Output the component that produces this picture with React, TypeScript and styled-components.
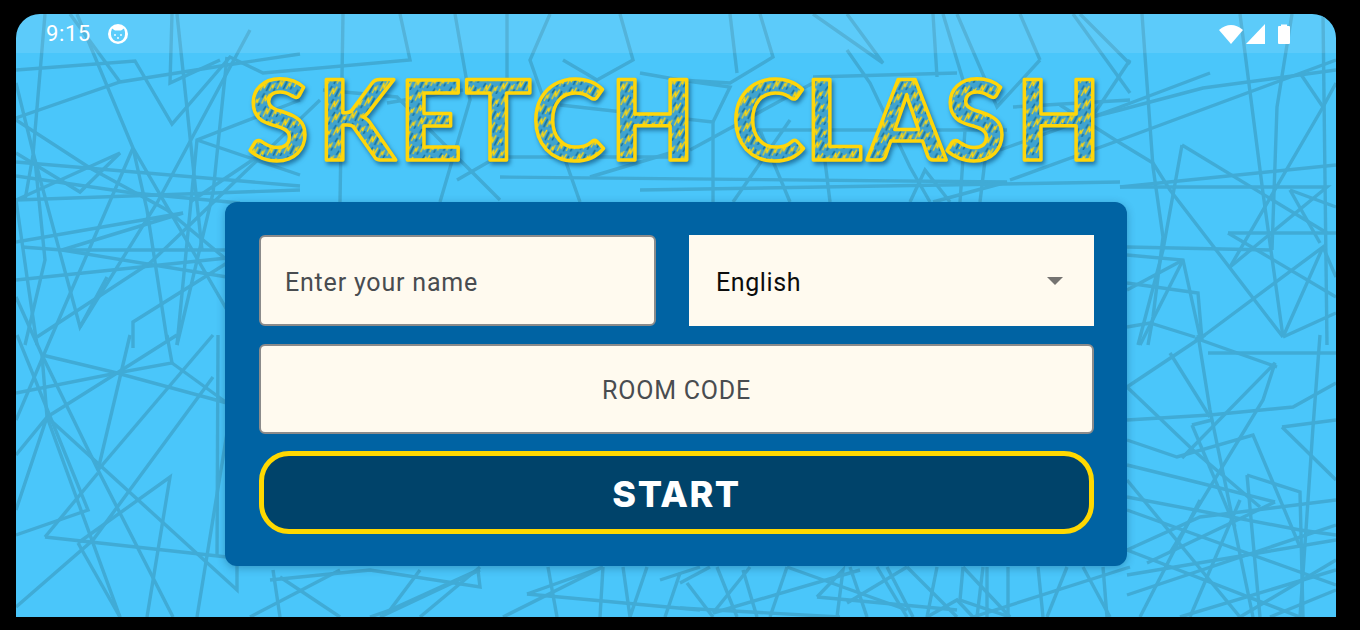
import React from "react";
import styled, { createGlobalStyle } from "styled-components";

const GlobalStyle = createGlobalStyle`
  html, body {
    margin: 0;
    height: 100%;
    background: #000;
  }
  body {
    padding: 14px 24px 13px 16px;
    box-sizing: border-box;
    font-family: Roboto, "Liberation Sans", sans-serif;
    overflow: hidden;
  }
`;

// traced by eye, in page coordinates
const SCRIBBLES = [
  "16,70 135,61 172,124 230,57 263,73 410,60 400,14",
  "16,118 120,82 240,63 300,54",
  "45,14 33,155 25,200",
  "77,14 133,148 227,310",
  "70,14 120,82",
  "16,120 90,168 167,210 227,260",
  "16,153 80,192 120,153 16,200",
  "16,162 300,186",
  "16,176 133,193 240,203",
  "16,200 300,190",
  "16,242 183,213 62,250 227,277",
  "22,247 62,250 227,250",
  "16,280 227,258",
  "35,160 80,327 107,277",
  "133,148 50,340 16,420",
  "133,148 147,210 167,340",
  "37,337 150,263 320,100",
  "133,348 133,322 227,263",
  "177,345 197,140 300,100",
  "197,140 300,175",
  "172,14 170,83 220,60",
  "177,14 202,250",
  "227,57 213,193 177,345",
  "250,30 157,203 80,327",
  "16,83 35,160 45,260 25,345",
  "16,200 27,277 37,345",
  "16,297 42,355",
  "42,355 117,373 172,363 167,335",
  "16,393 117,373 227,403",
  "42,355 47,417 120,617",
  "16,455 47,417 16,510",
  "47,417 117,373 177,335",
  "42,355 98,470 173,617",
  "17,335 88,510 16,535",
  "47,417 237,590 237,550",
  "98,470 130,335",
  "98,470 213,335",
  "45,537 227,557",
  "45,537 98,473",
  "78,543 170,477 147,617",
  "78,543 120,617",
  "16,607 93,540 213,377",
  "172,363 227,403",
  "218,335 217,557",
  "197,617 227,433",
  "270,580 370,570 480,587 478,570 390,610 370,617",
  "250,617 340,570",
  "280,577 340,617",
  "280,617 273,570",
  "390,610 420,570",
  "380,617 480,570",
  "420,617 480,567",
  "527,594 700,610",
  "527,594 603,567 503,617",
  "548,567 557,617",
  "603,567 600,617",
  "623,567 630,617 647,567",
  "680,573 665,617",
  "660,580 700,567",
  "680,583 710,567",
  "687,583 713,617",
  "717,567 737,617",
  "713,613 750,567",
  "743,570 757,617",
  "680,608 840,617",
  "770,617 787,567",
  "713,613 860,570",
  "787,567 907,610",
  "817,597 843,570 837,617",
  "817,597 957,610",
  "850,567 867,617",
  "847,603 907,567",
  "877,567 907,617",
  "887,567 913,617",
  "907,567 957,617",
  "937,567 927,617",
  "963,567 960,600 1010,617",
  "927,617 957,600 973,617",
  "963,567 1010,617",
  "983,567 977,617",
  "987,567 987,617",
  "1008,567 1008,617",
  "973,617 1130,567",
  "1038,567 1043,617",
  "1067,567 1047,617",
  "1083,567 1110,617",
  "1103,567 1107,617",
  "1142,14 1153,167 1163,237 1153,317 1148,345",
  "1000,150 1120,107 1210,73",
  "1040,130 1120,110 1203,88 1336,70",
  "1010,180 1120,140 1336,60",
  "1060,105 1120,143 1153,163 1170,190 1283,337",
  "1240,14 1263,193 1283,337",
  "1292,14 1277,107 1272,250",
  "1182,145 1327,233",
  "1182,145 1163,250 1138,345",
  "1120,187 1336,165",
  "1120,187 1327,187 1230,267",
  "1230,267 1323,107 1336,83",
  "1323,107 1300,73",
  "1323,14 1327,345",
  "1228,233 1336,233",
  "1228,233 1336,297",
  "1127,247 1270,250",
  "1127,255 1183,260 1200,337",
  "1183,260 1140,345",
  "1127,283 1198,293 1202,340",
  "1127,290 1183,260",
  "1127,327 1150,323 1195,337",
  "1202,337 1323,247 1283,337",
  "1290,190 1336,207",
  "1290,190 1320,243",
  "1323,247 1336,277",
  "1283,337 1336,313",
  "1198,335 1210,410 1253,617",
  "1127,387 1205,335",
  "1170,353 1210,417",
  "1127,387 1193,450 1260,507",
  "1208,353 1336,353",
  "1195,338 1277,367",
  "1127,420 1210,415 1293,407 1336,383",
  "1127,440 1177,457 1253,435 1300,547",
  "1182,458 1275,363 1263,400 1170,553",
  "1192,425 1235,527",
  "1192,425 1212,420",
  "1282,427 1336,420",
  "1282,427 1336,480",
  "1320,335 1313,427 1300,617",
  "1247,475 1300,492 1303,617",
  "1247,475 1260,617",
  "1127,465 1200,483 1275,502",
  "1275,502 1147,563",
  "1127,497 1300,530 1336,535",
  "1127,510 1336,585",
  "1127,550 1200,517 1336,500",
  "1127,575 1336,540",
  "1127,595 1336,525",
  "1127,550 1300,617",
  "1140,617 1200,500",
  "1190,617 1240,500",
  "1180,617 1336,570",
  "1240,617 1336,560",
  "1270,617 1336,590",
  "1127,480 1240,617",
  "343,14 340,202",
  "455,14 470,100 440,202",
  "507,14 507,100",
  "550,14 530,60 580,202",
  "563,60 597,80 633,60 620,14",
  "190,202 257,157 300,140",
  "457,180 497,157 680,157",
  "590,177 680,150",
  "387,103 463,90",
  "323,90 397,97 500,200",
  "640,73 680,80 730,83 773,57 760,14",
  "730,14 737,73",
  "680,80 730,87 713,122",
  "813,14 883,63 847,14",
  "847,50 870,83 910,167 930,202",
  "813,77 957,73",
  "933,14 937,77",
  "943,14 970,103",
  "1040,60 997,107 957,14",
  "1040,60 1020,14",
  "560,105 713,122 713,202",
  "500,177 1007,182 933,202",
  "640,190 1120,182",
  "690,150 813,83",
  "757,130 1007,130",
  "1130,100 1013,107",
  "1080,14 1130,64",
  "1073,14 1130,93",
  "1130,60 1090,120",
  "733,202 790,120",
  "790,202 760,130",
  "820,120 830,202",
  "910,202 925,170 950,202",
  "960,202 965,130",
  "980,202 985,160",
];

const Screen = styled.main`
  position: relative;
  width: 1320px;
  height: 603px;
  background: #4ac6fa;
  border-radius: 24px 24px 0 0;
  overflow: hidden;
`;

const Scribbles = styled.svg`
  position: absolute;
  inset: 0;
  width: 100%;
  height: 100%;
`;

const Scribble = styled.polyline`
  fill: none;
  stroke: #40abd6;
  stroke-width: 3.4;
  stroke-linejoin: miter;
`;

const Content = styled.div`
  position: relative;
  display: flex;
  flex-direction: column;
  align-items: center;
`;

const StatusBar = styled.header`
  align-self: stretch;
  height: 39px;
  display: flex;
  align-items: center;
  justify-content: space-between;
  padding: 0 46px 0 30px;
  background: rgba(255, 255, 255, 0.1);
  color: #fff;
  font-size: 22px;
  letter-spacing: 0.6px;
`;

const StatusLeft = styled.div`
  display: flex;
  align-items: center;
  gap: 17px;
`;

const StatusRight = styled.div`
  display: flex;
  align-items: center;
  gap: 13px;
`;

const SignalGroup = styled.div`
  display: flex;
  align-items: center;
  gap: 3px;
`;

const Logo = styled.svg`
  display: block;
  width: 1320px;
  height: 149px;
`;

const LogoText = styled.text`
  font-family: Lato, "Open Sans", sans-serif;
  font-weight: 900;
  font-size: 110px;
  stroke: #ffd60a;
  stroke-width: 3.5;
  stroke-linejoin: round;
  filter: drop-shadow(2px 3px 2px rgba(0, 55, 95, 0.55));
`;

const Card = styled.form`
  width: 902px;
  height: 364px;
  box-sizing: border-box;
  padding: 33px 33px 32px 34px;
  background: #0063a3;
  border-radius: 12px;
  box-shadow: 0 2px 8px rgba(0, 40, 70, 0.3);
  display: grid;
  grid-template-columns: 397px 405px;
  grid-template-rows: 91px 90px 82px;
  column-gap: 33px;
  row-gap: 18px;
`;

const Input = styled.input<{ $center?: boolean; $wide?: boolean }>`
  box-sizing: border-box;
  height: 100%;
  margin: 0;
  padding: 3px 24px 0;
  grid-column: ${(p) => (p.$wide ? "1 / -1" : "auto")};
  width: ${(p) => (p.$wide ? "835px" : "397px")};
  background: #fffaef;
  border: 2px solid #8b8b8b;
  border-radius: 6px;
  outline: none;
  font-family: Roboto, sans-serif;
  font-size: 25px;
  letter-spacing: 0.8px;
  text-align: ${(p) => (p.$center ? "center" : "left")};
  color: #000;

  &::placeholder {
    color: #494c50;
    opacity: 1;
  }
`;

const Select = styled.div`
  display: flex;
  align-items: center;
  justify-content: space-between;
  padding: 3px 31px 0 27px;
  background: #fffaef;
  font-size: 25px;
  letter-spacing: 0.6px;
  color: #0c0c0c;
`;

const Caret = styled.span`
  width: 0;
  height: 0;
  margin-top: -3px;
  border-left: 8px solid transparent;
  border-right: 8px solid transparent;
  border-top: 8px solid #757371;
`;

const StartButton = styled.button`
  grid-column: 1 / -1;
  width: 835px;
  margin-top: -1px;
  padding: 2px 0 0;
  box-sizing: border-box;
  background: #00436a;
  border: 5px solid #ffd800;
  border-radius: 30px;
  color: #fff;
  font-family: Inter, "Open Sans", sans-serif;
  font-weight: 800;
  font-size: 36px;
  letter-spacing: 1.5px;
`;

const MascotIcon = () => (
  <svg width="20" height="20" viewBox="0 0 20 20">
    <circle cx="10" cy="10" r="10" fill="#fff" />
    <path d="M3 8 L4 4.5 L7 6.5 H13 L16 4.5 L17 8 V10.5 A7 7 0 0 1 3 10.5 Z" fill="#5bcdfb" />
    <circle cx="7" cy="11" r="0.9" fill="#fff" />
    <circle cx="13" cy="11" r="0.9" fill="#fff" />
    <circle cx="10" cy="14" r="0.9" fill="#fff" />
  </svg>
);

const WifiIcon = () => (
  <svg width="24" height="20" viewBox="0 0 24 20">
    <path d="M0 6 Q12 -4 24 6 L12 20 Z" fill="#fff" />
  </svg>
);

const SignalIcon = () => (
  <svg width="19" height="20" viewBox="0 0 19 20">
    <path d="M0 20 L19 0 V20 Z" fill="#fff" />
  </svg>
);

const BatteryIcon = () => (
  <svg width="12" height="20" viewBox="0 0 12 20">
    <path d="M3 2 V0.5 H9 V2 H11 Q12 2 12 3 V19 Q12 20 11 20 H1 Q0 20 0 19 V3 Q0 2 1 2 Z" fill="#fff" />
  </svg>
);

const App: React.FC = () => (
  <>
    <GlobalStyle />
    <Screen>
      <Scribbles viewBox="16 14 1320 603">
        {SCRIBBLES.map((points, i) => (
          <Scribble key={i} points={points} />
        ))}
      </Scribbles>
      <Content>
        <StatusBar>
          <StatusLeft>
            <span>9:15</span>
            <MascotIcon />
          </StatusLeft>
          <StatusRight>
            <SignalGroup>
              <WifiIcon />
              <SignalIcon />
            </SignalGroup>
            <BatteryIcon />
          </StatusRight>
        </StatusBar>
        <Logo viewBox="0 0 1320 149">
          <defs>
            <pattern id="hatch" width="17" height="13" patternUnits="userSpaceOnUse" patternTransform="rotate(-6)">
              <rect width="17" height="13" fill="#3fa3cf" />
              <path d="M1 11 L6 3 L5 9 L10 2" fill="none" stroke="#ffd60a" strokeWidth="1.3" />
              <path d="M10 12 L14 6 L13.5 10 L16.5 5" fill="none" stroke="#ffd60a" strokeWidth="1.1" />
              <path d="M7 12 L12 4 M2 5 L5 1 M14 13 L16 10" stroke="#17729f" strokeWidth="1.5" />
            </pattern>
          </defs>
          <LogoText fill="url(#hatch)" x="232 302 383 449 516 594 680 716 789 852 929 1000" y="107">
            SKETCH CLASH
          </LogoText>
        </Logo>
        <Card onSubmit={(e) => e.preventDefault()}>
          <Input placeholder="Enter your name" readOnly />
          <Select>
            English
            <Caret />
          </Select>
          <Input $wide $center placeholder="ROOM CODE" readOnly />
          <StartButton type="button">START</StartButton>
        </Card>
      </Content>
    </Screen>
  </>
);

export default App;
